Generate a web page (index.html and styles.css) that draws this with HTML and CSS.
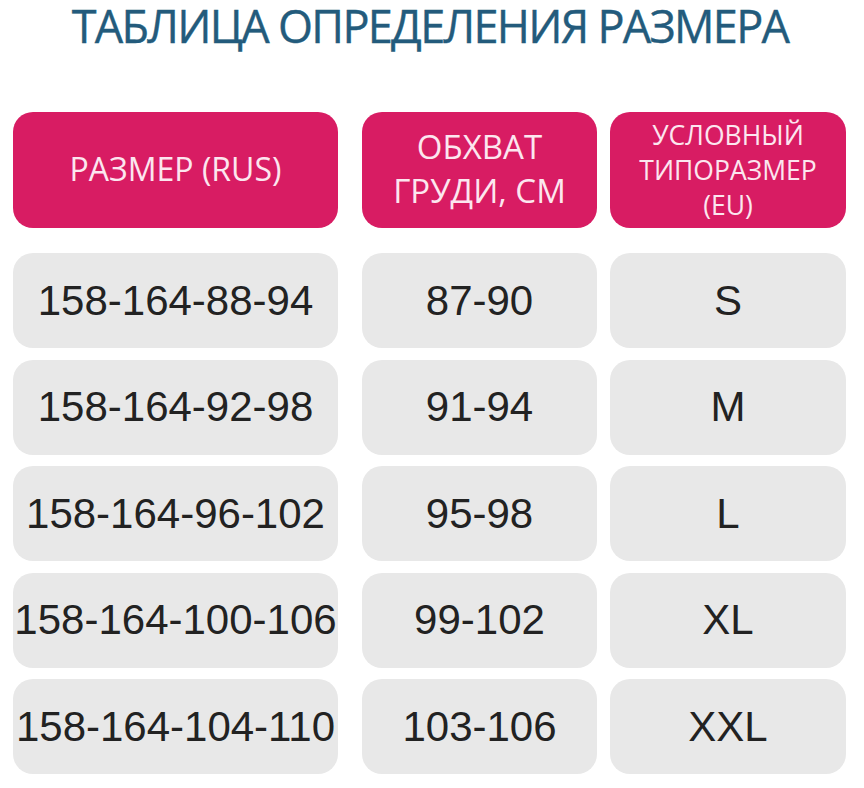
FILE: index.html
```html
<!DOCTYPE html>
<html lang="ru">
<head>
<meta charset="utf-8">
<link rel="stylesheet" href="styles.css">
</head>
<body>
<div class="page">
  <h1 class="title">ТАБЛИЦА ОПРЕДЕЛЕНИЯ РАЗМЕРА</h1>
  <div class="grid heads">
    <div class="cell head c1"><span class="h1t">РАЗМЕР (RUS)</span></div>
    <div class="cell head"><span class="h2t">ОБХВАТ<br>ГРУДИ, СМ</span></div>
    <div class="cell head"><span class="h3t">УСЛОВНЫЙ<br>ТИПОРАЗМЕР<br>(EU)</span></div>
  </div>
  <div class="grid rows">
    <div class="cell body c1">158-164-88-94</div>
    <div class="cell body">87-90</div>
    <div class="cell body">S</div>

    <div class="cell body c1">158-164-92-98</div>
    <div class="cell body">91-94</div>
    <div class="cell body">M</div>

    <div class="cell body c1">158-164-96-102</div>
    <div class="cell body">95-98</div>
    <div class="cell body">L</div>

    <div class="cell body c1">158-164-100-106</div>
    <div class="cell body">99-102</div>
    <div class="cell body">XL</div>

    <div class="cell body c1">158-164-104-110</div>
    <div class="cell body">103-106</div>
    <div class="cell body">XXL</div>
  </div>
</div>
</body>
</html>
```
FILE: styles.css
```css
html, body {
  margin: 0;
  padding: 0;
  background: #ffffff;
}
.page {
  width: 864px;
  height: 788px;
  overflow: hidden;
}
.title {
  margin: 0;
  height: 112px;
  padding-right: 4px;
  box-sizing: border-box;
  text-align: center;
  font-family: "Open Sans", sans-serif;
  font-weight: 400;
  font-size: 45px;
  line-height: 52px;
  letter-spacing: -1.7px;
  color: #235b7c;
  -webkit-text-stroke: 0.4px #235b7c;
}
.grid {
  display: grid;
  grid-template-columns: 336px 235px 236px;
  column-gap: 13px;
  padding-left: 13px;
}
.heads {
  grid-template-rows: 116px;
}
.rows {
  margin-top: 25px;
  grid-template-rows: repeat(5, 95px);
  row-gap: 11.5px;
}
.cell {
  display: flex;
  align-items: center;
  justify-content: center;
  text-align: center;
  border-radius: 20px;
}
.c1 { width: 325px; }
.head {
  background: #d81c63;
  color: #fce6ef;
  font-family: "Open Sans", sans-serif;
}
.h1t { font-size: 32px; line-height: 40px; padding-bottom: 2px; }
.h2t { font-size: 33px; line-height: 44px; padding-bottom: 2px; }
.h3t { font-size: 26.5px; line-height: 35px; }
.body {
  background: #e8e8e8;
  color: #222222;
  font-family: "Liberation Sans", Arial, sans-serif;
  font-size: 42px;
}
```
